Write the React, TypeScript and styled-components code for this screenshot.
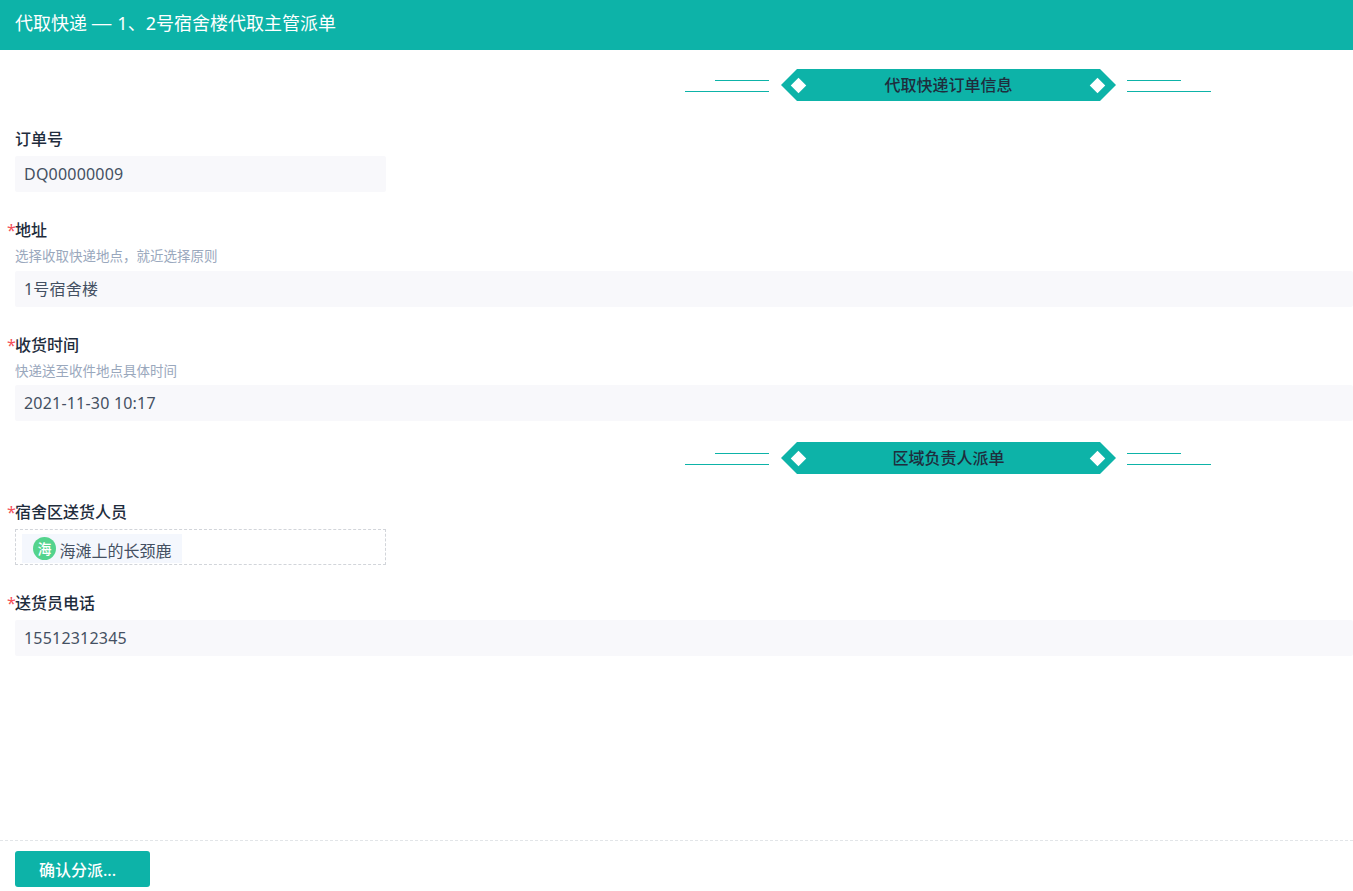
import React from "react";
import styled, { createGlobalStyle } from "styled-components";

const FONT = `"Noto Sans", "Noto Sans CJK SC", sans-serif`;
const TEAL = "#0db3a8";

const Global = createGlobalStyle`
  html, body { margin: 0; padding: 0; background: #fff; overflow: hidden; }
  body { font-family: ${FONT}; color: #1f2d3d; }
`;

const Page = styled.div`
  width: 1353px;
  height: 891px;
  display: flex;
  flex-direction: column;
`;

const Header = styled.header`
  height: 50px;
  box-sizing: border-box;
  flex: none;
  background: ${TEAL};
  color: #fff;
  font-size: 18px;
  word-spacing: 1.5px;
  line-height: 46px;
  padding-left: 15px;
`;

const Dash = styled.span`
  display: inline-block;
  transform: translateX(-0.5px) scaleX(1.18);
`;

const Main = styled.main`
  flex: 1;
  padding: 19px 0 0 15px;
  display: flex;
  flex-direction: column;
`;

const SectionRow = styled.div<{ $bottom: number }>`
  display: flex;
  align-items: center;
  height: 32px;
  padding-left: 670px;
  margin-bottom: ${(p) => p.$bottom}px;
`;

const Lines = styled.div<{ $flip?: boolean }>`
  width: 84px;
  height: 12px;
  flex: none;
  display: flex;
  flex-direction: column;
  justify-content: space-between;
  align-items: ${(p) => (p.$flip ? "flex-start" : "flex-end")};
  margin-top: 2px;
`;

const Line = styled.span<{ $w: number }>`
  display: block;
  height: 1px;
  width: ${(p) => p.$w}px;
  background: ${TEAL};
`;

const Ribbon = styled.div`
  position: relative;
  width: 335px;
  height: 32px;
  margin: 0 11px 0 12px;
  flex: none;
  background: ${TEAL};
  clip-path: polygon(16px 0, 319px 0, 335px 16px, 319px 32px, 16px 32px, 0 16px);
  text-align: center;
  font-size: 16px;
  font-weight: 500;
  line-height: 32px;
  color: #1f2d3d;
`;

const Diamond = styled.i<{ $right?: boolean }>`
  position: absolute;
  top: 10.5px;
  ${(p) => (p.$right ? "right: 13px;" : "left: 12px;")}
  width: 11px;
  height: 11px;
  background: #fff;
  transform: rotate(45deg);
`;

const Field = styled.section<{ $gap: number }>`
  margin-bottom: ${(p) => p.$gap}px;
`;

const Label = styled.div`
  position: relative;
  font-size: 16px;
  font-weight: 500;
  line-height: 20px;
  height: 20px;
  color: #1f2d3d;
`;

const Star = styled.span`
  position: absolute;
  left: -8px;
  top: 0;
  color: #f4505a;
  font-size: 16px;
  font-weight: 400;
`;

const Hint = styled.div`
  font-size: 13.5px;
  line-height: 16px;
  margin-top: 8px;
  color: #9aa8bd;
`;

const Value = styled.div<{ $short?: boolean; $tight?: boolean }>`
  box-sizing: border-box;
  height: 36px;
  margin-top: ${(p) => (p.$tight ? 6 : 7)}px;
  width: ${(p) => (p.$short ? "371px" : "auto")};
  background: #f8f8fb;
  border-radius: 2px;
  padding-left: 9px;
  font-size: 16px;
  letter-spacing: 0.2px;
  line-height: 36px;
  color: #445062;
`;

const PeopleBox = styled.div`
  box-sizing: border-box;
  height: 36px;
  width: 371px;
  margin-top: 7px;
  border: 1px dashed #d2d5da;
  padding: 4px 6px 0;
`;

const Chip = styled.div`
  display: flex;
  align-items: center;
  height: 29px;
  width: 160px;
  box-sizing: border-box;
  padding-left: 11px;
  background: #f4f7fd;
  font-size: 16px;
  color: #445062;
`;

const ChipName = styled.span`
  margin-top: 2px;
`;

const Avatar = styled.span`
  width: 23px;
  height: 23px;
  border-radius: 50%;
  background: #53d38d;
  color: #fff;
  font-size: 14px;
  font-weight: 500;
  line-height: 23px;
  text-align: center;
  margin-right: 3.5px;
  flex: none;
`;

const Footer = styled.footer`
  flex: none;
  height: 51px;
  box-sizing: border-box;
  border-top: 1px dashed #e2e5e8;
  padding: 10px 15px 0;
`;

const Submit = styled.button`
  display: block;
  width: 135px;
  height: 36px;
  border: 0;
  border-radius: 3px;
  background: ${TEAL};
  color: #fff;
  font-family: ${FONT};
  font-size: 16px;
  font-weight: 500;
  text-align: left;
  padding: 0 0 0 24px;
`;

const Section = ({ title, bottom }: { title: string; bottom: number }) => (
  <SectionRow $bottom={bottom}>
    <Lines>
      <Line $w={54} />
      <Line $w={84} />
    </Lines>
    <Ribbon>
      <Diamond />
      {title}
      <Diamond $right />
    </Ribbon>
    <Lines $flip>
      <Line $w={54} />
      <Line $w={84} />
    </Lines>
  </SectionRow>
);

export default function App() {
  return (
    <Page>
      <Global />
      <Header>代取快递 <Dash>—</Dash> 1、2号宿舍楼代取主管派单</Header>
      <Main>
        <Section title="代取快递订单信息" bottom={28} />
        <Field $gap={28}>
          <Label>订单号</Label>
          <Value $short>DQ00000009</Value>
        </Field>
        <Field $gap={28}>
          <Label><Star>*</Star>地址</Label>
          <Hint>选择收取快递地点，就近选择原则</Hint>
          <Value>1号宿舍楼</Value>
        </Field>
        <Field $gap={21}>
          <Label><Star>*</Star>收货时间</Label>
          <Hint>快递送至收件地点具体时间</Hint>
          <Value $tight>2021-11-30 10:17</Value>
        </Field>
        <Section title="区域负责人派单" bottom={28} />
        <Field $gap={28}>
          <Label><Star>*</Star>宿舍区送货人员</Label>
          <PeopleBox>
            <Chip>
              <Avatar>海</Avatar>
              <ChipName>海滩上的长颈鹿</ChipName>
            </Chip>
          </PeopleBox>
        </Field>
        <Field $gap={0}>
          <Label><Star>*</Star>送货员电话</Label>
          <Value>15512312345</Value>
        </Field>
      </Main>
      <Footer>
        <Submit>确认分派...</Submit>
      </Footer>
    </Page>
  );
}
